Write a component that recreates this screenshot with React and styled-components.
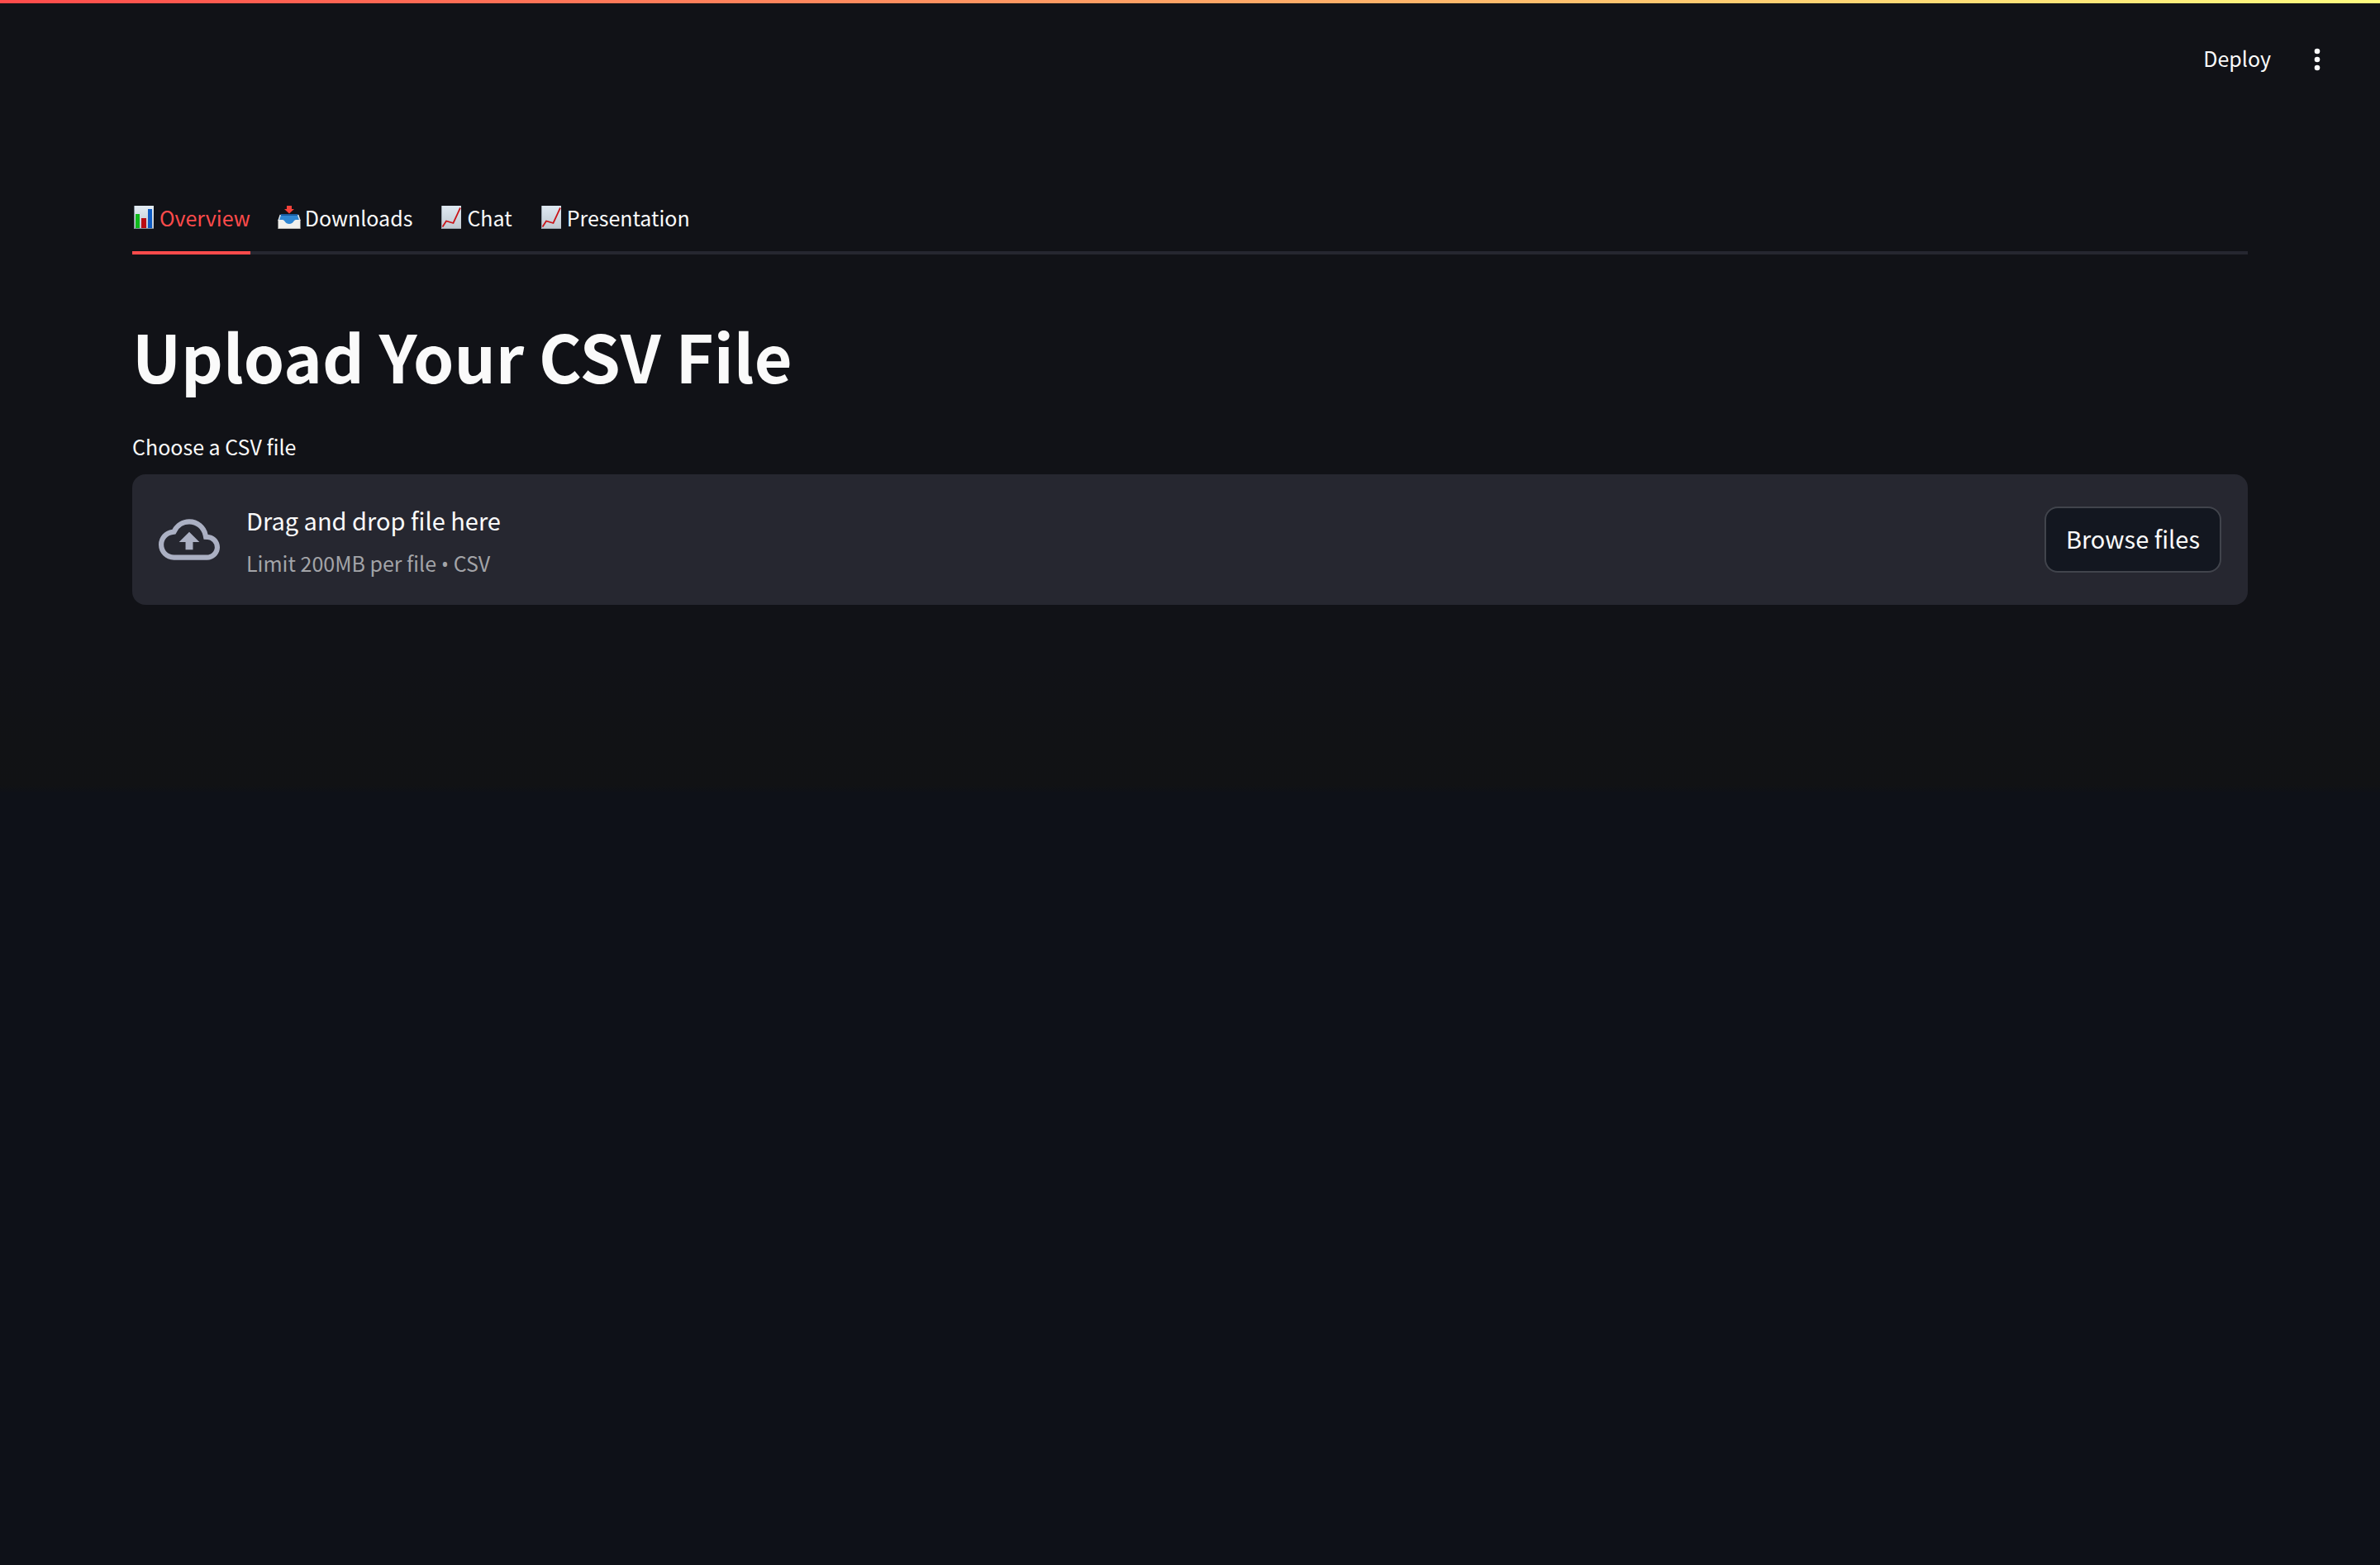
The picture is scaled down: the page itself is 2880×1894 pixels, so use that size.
import React, { useState, useRef } from "react";
import styled, { createGlobalStyle } from "styled-components";

const GlobalStyle = createGlobalStyle`
  *, *::before, *::after { box-sizing: border-box; }
  body {
    margin: 0;
    background: linear-gradient(#111217 0, #111217 800px, #111214 950px, #0e1118 960px) #0e1118 no-repeat;
    color: #fafafa;
    font-family: "Noto Sans CJK SC", "Noto Sans", sans-serif;
    font-size: 25px;
    line-height: 40px;
  }
  button { font: inherit; color: inherit; cursor: pointer; }
`;

const Page = styled.div`
  min-height: 100vh;
  display: flex;
  flex-direction: column;
`;

const Decoration = styled.div`
  height: 4px;
  background: linear-gradient(90deg, #ff4b4b, #fffd80);
`;

const Header = styled.header`
  display: flex;
  justify-content: flex-end;
  align-items: center;
  gap: 36px;
  padding: 44px 56px 0 0;
`;

const PlainButton = styled.button`
  display: flex;
  align-items: center;
  justify-content: center;
  height: 48px;
  min-width: 40px;
  padding: 0;
  border: 0;
  background: none;
`;

const DeployButton = styled(PlainButton)`
  padding-bottom: 4px;
`;

const Main = styled.main`
  padding: 148px 160px 64px;
`;

const TabList = styled.div`
  display: flex;
  gap: 33px;
  box-shadow: inset 0 -4px #262730;
`;

const Tab = styled.button`
  display: flex;
  align-items: center;
  gap: 5px;
  height: 64px;
  padding: 0 0 26px;
  border: 0;
  background: none;
  color: ${(p) => (p.$active ? "#ff4b4b" : "#fafafa")};
  box-shadow: inset 0 -4px ${(p) => (p.$active ? "#ff4b4b" : "transparent")};
`;

const Title = styled.h1`
  margin: 69px 0 0;
  font-size: 79px;
  font-weight: 700;
  line-height: 106px;
`;

const Label = styled.label`
  display: block;
  margin: 37px 0 14px;
`;

const Dropzone = styled.section`
  display: flex;
  align-items: center;
  gap: 32px;
  min-height: 158px;
  padding: 24px 32px;
  border-radius: 16px;
  background: #262730;
  color: #abb0c3;
`;

const Instructions = styled.div`
  flex: 1;
  display: flex;
  flex-direction: column;
  padding-top: 4px;
`;

const Prompt = styled.span`
  color: #fafafa;
  font-size: 29px;
  line-height: 52px;
`;

const Hint = styled.small`
  color: #a3a4a8;
  font-size: 25px;
  line-height: 52px;
`;

const Bullet = styled.span`
  font-family: "Open Sans", sans-serif;
  line-height: 1;
`;

const BrowseButton = styled.button`
  height: 80px;
  padding: 0 24px 4px;
  border: 2px solid #41444c;
  border-radius: 16px;
  background: #131720;
  color: #fafafa;
  font-size: 29px;
`;

const HiddenInput = styled.input`
  display: none;
`;

const BarChartIcon = () => (
  <svg width="28" height="28" viewBox="0 0 28 28" aria-hidden="true">
    <defs>
      <linearGradient id="barPaper" x1="0" y1="0" x2="0" y2="1">
        <stop offset="0" stopColor="#e4edf5" />
        <stop offset="1" stopColor="#bcc5cf" />
      </linearGradient>
    </defs>
    <rect x="2" y="0" width="24" height="28" fill="url(#barPaper)" />
    <rect x="4" y="10" width="5" height="17" fill="#0fb91c" />
    <rect x="11" y="15" width="6" height="12" fill="#b90c12" />
    <rect x="19" y="4" width="5" height="23" fill="#0d5bc4" />
    <path d="M2.5 0V27.5H26" fill="none" stroke="#7f8b97" />
  </svg>
);

const InboxIcon = () => (
  <svg width="28" height="28" viewBox="0 0 28 28" aria-hidden="true">
    <path d="M4 10H24L27 18V26H1V18Z" fill="#2f86d2" />
    <path d="M4 10H24L24.500 12H3.500Z" fill="#17599f" />
    <path d="M3.300 11L1 18M24.700 11L27 18" stroke="#dfe6ec" strokeWidth="1.500" />
    <path d="M0.500 17H6C8.500 17 9 22 14 22C19 22 19.500 17 22 17H27.500V27.500H0.500Z" fill="#f1f0ec" />
    <path d="M0.500 27.500H27.500" stroke="#bdbcb8" />
    <path d="M11 0H17V4H20L14 9.500L8 4H11Z" fill="#f5423a" />
  </svg>
);

const LineChartIcon = () => (
  <svg width="28" height="28" viewBox="0 0 28 28" aria-hidden="true">
    <defs>
      <linearGradient id="linePaper" x1="0" y1="0" x2="0" y2="1">
        <stop offset="0" stopColor="#dfe9f2" />
        <stop offset="1" stopColor="#c0c8d0" />
      </linearGradient>
    </defs>
    <rect x="2" y="0" width="24" height="28" fill="url(#linePaper)" />
    <path d="M2.500 0V27.500H26" fill="none" stroke="#9aa5ae" />
    <path d="M3.500 25.500L8 18.500L16.500 21L25 2.500" fill="none" stroke="#c91418" strokeWidth="1.800" />
  </svg>
);

const CloudUploadIcon = () => (
  <svg width="74" height="74" viewBox="0 0 24 24" fill="currentColor" aria-hidden="true">
    <path d="M19.350 10.040A7.490 7.490 0 0 0 12 4C9.110 4 6.600 5.640 5.350 8.040A5.994 5.994 0 0 0 0 14c0 3.310 2.690 6 6 6h13c2.760 0 5-2.240 5-5 0-2.640-2.050-4.780-4.650-4.960zM19 18H6c-2.210 0-4-1.790-4-4 0-2.050 1.530-3.760 3.560-3.970l1.070-.110.500-.950A5.469 5.469 0 0 1 12 6c2.620 0 4.880 1.860 5.390 4.430l.300 1.500 1.530.110A2.980 2.980 0 0 1 22 15c0 1.650-1.350 3-3 3zM8 13h2.550v3h2.900v-3H16l-4-4z" />
  </svg>
);

const KebabIcon = () => (
  <svg width="40" height="40" viewBox="0 0 40 40" fill="currentColor" aria-hidden="true">
    <circle cx="20" cy="10" r="3.300" />
    <circle cx="20" cy="20" r="3.300" />
    <circle cx="20" cy="30" r="3.300" />
  </svg>
);

const TABS = [
  { name: "Overview", Icon: BarChartIcon },
  { name: "Downloads", Icon: InboxIcon },
  { name: "Chat", Icon: LineChartIcon },
  { name: "Presentation", Icon: LineChartIcon },
];

export default function App() {
  const [active, setActive] = useState("Overview");
  const fileInput = useRef(null);

  return (
    <Page>
      <GlobalStyle />
      <Decoration />
      <Header>
        <DeployButton type="button">Deploy</DeployButton>
        <PlainButton type="button" aria-label="Main menu">
          <KebabIcon />
        </PlainButton>
      </Header>
      <Main>
        <TabList role="tablist">
          {TABS.map(({ name, Icon }) => (
            <Tab
              key={name}
              type="button"
              role="tab"
              aria-selected={active === name}
              $active={active === name}
              onClick={() => setActive(name)}
            >
              <Icon />
              {name}
            </Tab>
          ))}
        </TabList>
        <Title>Upload Your CSV File</Title>
        <Label htmlFor="csv-file">Choose a CSV file</Label>
        <Dropzone>
          <CloudUploadIcon />
          <Instructions>
            <Prompt>Drag and drop file here</Prompt>
            <Hint>
              Limit 200MB per file <Bullet>•</Bullet> CSV
            </Hint>
          </Instructions>
          <HiddenInput id="csv-file" type="file" accept=".csv" ref={fileInput} />
          <BrowseButton type="button" onClick={() => fileInput.current.click()}>
            Browse files
          </BrowseButton>
        </Dropzone>
      </Main>
    </Page>
  );
}
